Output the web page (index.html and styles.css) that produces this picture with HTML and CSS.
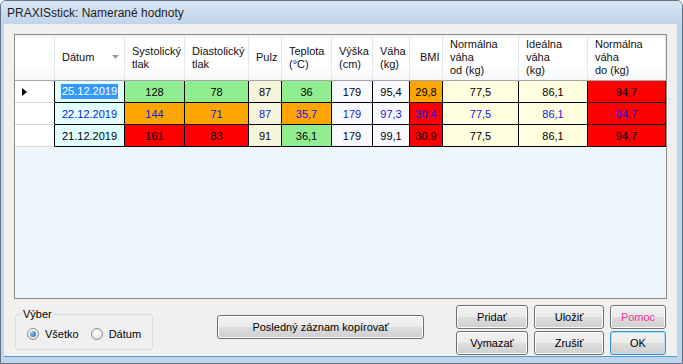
FILE: index.html
```html
<!DOCTYPE HTML>
<html>
<head>
<meta charset="utf-8">
<title>PRAXISstick: Namerané hodnoty</title>
<link rel="stylesheet" href="styles.css">
</head>
<body>
<div class="window">
  <div class="titlebar">PRAXISstick: Namerané hodnoty</div>
  <div class="client">
    <div class="grid">
      <table class="data">
        <colgroup>
          <col class="w-rowhead">
          <col class="w-date">
          <col class="w-sys">
          <col class="w-dia">
          <col class="w-pulse">
          <col class="w-temp">
          <col class="w-height">
          <col class="w-weight">
          <col class="w-bmi">
          <col class="w-wmin">
          <col class="w-wideal">
          <col class="w-wmax">
        </colgroup>
        <thead>
          <tr>
            <th class="rowhead"></th>
            <th>Dátum<svg class="sort" width="7" height="4" viewBox="0 0 7 4"><polygon points="0,0 7,0 3.5,4" fill="#9a9a9a"/></svg></th>
            <th>Systolický<br>tlak</th>
            <th>Diastolický<br>tlak</th>
            <th>Pulz</th>
            <th>Teplota<br>(°C)</th>
            <th>Výška<br>(cm)</th>
            <th>Váha<br>(kg)</th>
            <th class="bmi">BMI</th>
            <th>Normálna<br>váha<br>od (kg)</th>
            <th>Ideálna<br>váha<br>(kg)</th>
            <th>Normálna<br>váha<br>do (kg)</th>
          </tr>
        </thead>
        <tbody>
          <tr>
            <td class="rowhead"><svg width="5" height="8" viewBox="0 0 5 8"><polygon points="0,0 5,4 0,8" fill="#000"/></svg></td>
            <td class="date"><span class="selected">25.12.2019</span></td>
            <td class="good">128</td>
            <td class="good">78</td>
            <td class="pulse">87</td>
            <td class="good">36</td>
            <td class="plain">179</td>
            <td class="plain">95,4</td>
            <td class="warn">29,8</td>
            <td class="ref">77,5</td>
            <td class="ref">86,1</td>
            <td class="bad">94,7</td>
          </tr>
          <tr class="blue">
            <td class="rowhead"></td>
            <td class="date">22.12.2019</td>
            <td class="warn">144</td>
            <td class="warn">71</td>
            <td class="pulse">87</td>
            <td class="warn">35,7</td>
            <td class="plain">179</td>
            <td class="plain">97,3</td>
            <td class="bad">30,4</td>
            <td class="ref">77,5</td>
            <td class="ref">86,1</td>
            <td class="bad">94,7</td>
          </tr>
          <tr>
            <td class="rowhead"></td>
            <td class="date">21.12.2019</td>
            <td class="bad">161</td>
            <td class="bad">83</td>
            <td class="pulse">91</td>
            <td class="good">36,1</td>
            <td class="plain">179</td>
            <td class="plain">99,1</td>
            <td class="bad">30,9</td>
            <td class="ref">77,5</td>
            <td class="ref">86,1</td>
            <td class="bad">94,7</td>
          </tr>
        </tbody>
      </table>
    </div>

    <div class="bottom">
      <div class="groupbox">
        <span class="legend">Výber</span>
        <label class="option"><span class="radio checked"></span>Všetko</label>
        <label class="option"><span class="radio"></span>Dátum</label>
      </div>
      <button class="btn copy">Posledný záznam kopírovať</button>
      <div class="actions">
        <button class="btn">Pridať</button>
        <button class="btn">Uložiť</button>
        <button class="btn help">Pomoc</button>
        <button class="btn">Vymazať</button>
        <button class="btn">Zrušiť</button>
        <button class="btn default">OK</button>
      </div>
    </div>
  </div>
</div>
</body>
</html>
```

FILE: styles.css
```css
* {
  box-sizing: border-box;
}

body {
  margin: 0;
  font-family: "Liberation Sans", Arial, sans-serif;
  font-size: 11px;
  color: #000;
}

.window {
  width: 683px;
  height: 364px;
  border: 1px solid #5f7389;
  border-radius: 6px 6px 0 0;
  background: #c0d4eb;
  padding: 0 5px 6px 3px;
  display: flex;
  flex-direction: column;
}

.titlebar {
  height: 23px;
  margin: 0 -5px 0 -3px;
  padding-left: 6px;
  border-radius: 5px 5px 0 0;
  background: linear-gradient(#d9e6f4, #c0d4eb);
  font-size: 12px;
  line-height: 24px;
  color: #1e1e1e;
}

.client {
  flex: 1;
  background: #f0f0f0;
  padding: 10px 10px 0 10px;
  border-bottom: 1px solid #4d9ad6;
}

/* data grid */

.grid {
  height: 265px;
  border: 1px solid #8c8c8c;
  background: #eef6fd;
}

.data {
  table-layout: fixed;
  border-collapse: separate;
  border-spacing: 0;
  width: 651px;
}

.w-rowhead { width: 40px; }
.w-date { width: 70px; }
.w-sys { width: 60px; }
.w-dia { width: 64px; }
.w-pulse { width: 33px; }
.w-temp { width: 50px; }
.w-height { width: 41px; }
.w-weight { width: 37px; }
.w-bmi { width: 33px; }
.w-wmin { width: 76px; }
.w-wideal { width: 69px; }
.w-wmax { width: 78px; }

.data th {
  height: 46px;
  padding: 0 0 0 7px;
  text-align: left;
  font-weight: normal;
  line-height: 13px;
  color: #111;
  background: linear-gradient(#f1f2f4 0, #ffffff 5px, #ffffff 70%, #f6f7f9 100%);
  border-right: 1px solid #e4e7eb;
  border-bottom: 1px solid #a5a5a5;
  white-space: nowrap;
}

.data th.bmi {
  padding-left: 10px;
}

.sort {
  margin-left: 18px;
  vertical-align: 2px;
}

.data td {
  height: 22px;
  padding: 0;
  text-align: center;
  border-right: 1px solid #000;
  border-bottom: 1px solid #000;
  white-space: nowrap;
}

.data td.rowhead {
  background: #fff;
  border-bottom: 1px solid #d9d9d9;
  text-align: left;
  padding-left: 7px;
}

.blue td {
  color: #1414e6;
}

.date { background: #e0ffff; }
.good { background: #90ee90; }
.warn { background: #ffa500; }
.bad { background: #ff0000; }
.pulse { background: #f5f5dc; }
.plain { background: #f8f8ff; }
.ref { background: #ffffe0; }

.selected {
  display: inline-block;
  background: #3399ff;
  color: #fff;
  line-height: 15px;
  padding: 0 1px;
}

/* bottom controls */

.bottom {
  display: flex;
  align-items: flex-start;
}

.groupbox {
  position: relative;
  margin: 15px 0 0 1px;
  width: 138px;
  height: 36px;
  border: 1px solid #d5dfe5;
  border-radius: 3px;
  display: flex;
  align-items: center;
  padding: 4px 0 0 11px;
}

.legend {
  position: absolute;
  top: -7px;
  left: 6px;
  padding: 0 1px;
  background: #f0f0f0;
  line-height: 13px;
}

.option {
  display: flex;
  align-items: center;
  gap: 6px;
  margin-right: 12px;
}

.radio {
  width: 12px;
  height: 12px;
  border-radius: 50%;
  border: 1px solid #8e8f8f;
  background: radial-gradient(circle at 40% 35%, #ffffff, #dcdcdc);
  position: relative;
}

.radio.checked::after {
  content: "";
  position: absolute;
  left: 2px;
  top: 2px;
  width: 6px;
  height: 6px;
  border-radius: 50%;
  background: radial-gradient(circle at 35% 30%, #8fd0f7, #1a5e9c);
}

.btn {
  height: 24px;
  margin: 0;
  padding: 0;
  border: 1px solid #707070;
  border-radius: 3px;
  background: linear-gradient(#f2f2f2 0%, #ebebeb 50%, #dddddd 51%, #cfcfcf 100%);
  box-shadow: inset 0 0 0 1px #fbfbfb;
  font-family: "Liberation Sans", Arial, sans-serif;
  font-size: 11px;
  color: #000;
}

.copy {
  width: 207px;
  margin: 16px 0 0 64px;
}

.actions {
  display: grid;
  grid-template-columns: 72px 70px 56px;
  grid-auto-rows: 24px;
  gap: 2px 6px;
  margin: 6px 0 0 32px;
}

.help {
  color: #f0329a;
}

.default {
  border-color: #3c8fd0;
  box-shadow: inset 0 0 0 1px #a8e2f8;
}
```
